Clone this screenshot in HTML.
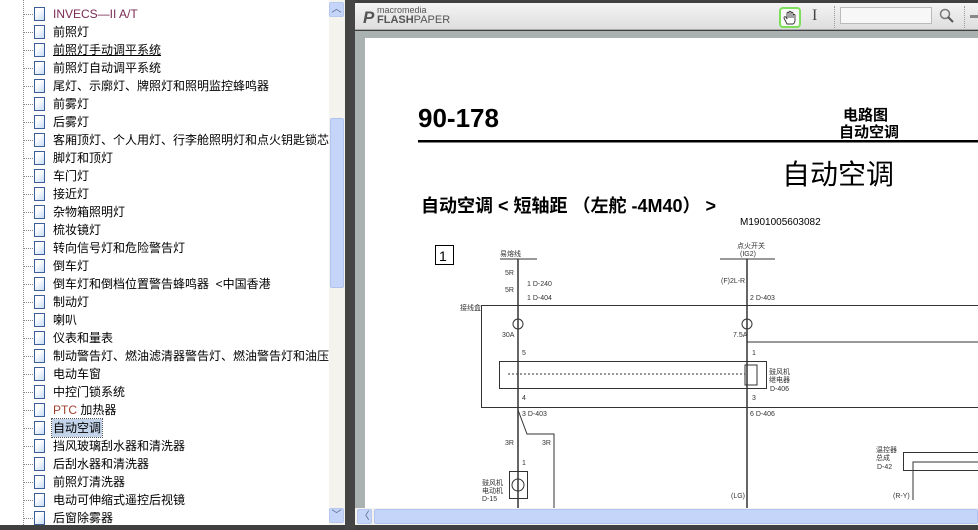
<!DOCTYPE html>
<html><head><meta charset="utf-8"><style>
*{margin:0;padding:0;box-sizing:border-box}
body{width:978px;height:530px;overflow:hidden;background:#404040;position:relative;font-family:"Liberation Sans","Noto Sans CJK SC",sans-serif}
#left{position:absolute;left:0;top:0;width:329px;height:525px;background:#fff;overflow:hidden}
.row{position:absolute;left:0;height:18px;width:329px;font-size:12px;color:#000;line-height:18px}
.row .d{position:absolute;left:24px;top:9px;width:9px;border-top:1px dotted #888}
.row .i{position:absolute;left:34px;top:2px;width:11px;height:14px;border:1px solid #3d5f99;background:linear-gradient(135deg,#fff 30%,#c8dcf7)}
.row .t{position:absolute;left:53px;top:0;white-space:nowrap}
#vline{position:absolute;left:23px;top:0;height:525px;border-left:1px dotted #888}
#lsb{position:absolute;left:329px;top:0;width:16px;height:525px;background:#f4f3ee}
.btn{position:absolute;width:15px;height:15px;border:1px solid #b6c8f0;border-radius:2px;background:#c5d5fa;color:#4d6185;font-size:10px;text-align:center;line-height:13px}
#div{position:absolute;left:345px;top:0;width:10px;height:530px;background:#454545}
#tb{position:absolute;left:355px;top:3px;width:623px;height:27px;background:linear-gradient(#f4f4f4,#dedede);border-bottom:1px solid #aaa}
#gray{position:absolute;left:355px;top:31px;width:623px;height:477px;background:#a9b1b1}
#page{position:absolute;left:365px;top:38px;width:613px;height:470px;background:#fff;overflow:hidden}
#hsb{position:absolute;left:355px;top:508px;width:623px;height:17px;background:#f4f3ee}
</style></head><body>
<div id="left">
<div id="vline"></div>
<div class="row" style="top:5px"><span class="d"></span><span class="i"></span><span class="t" style="color:#7a2a55">INVECS—II A/T</span></div>
<div class="row" style="top:23px"><span class="d"></span><span class="i"></span><span class="t">前照灯</span></div>
<div class="row" style="top:41px"><span class="d"></span><span class="i"></span><span class="t" style="text-decoration:underline">前照灯手动调平系统</span></div>
<div class="row" style="top:59px"><span class="d"></span><span class="i"></span><span class="t">前照灯自动调平系统</span></div>
<div class="row" style="top:77px"><span class="d"></span><span class="i"></span><span class="t">尾灯、示廓灯、牌照灯和照明监控蜂鸣器</span></div>
<div class="row" style="top:95px"><span class="d"></span><span class="i"></span><span class="t">前雾灯</span></div>
<div class="row" style="top:113px"><span class="d"></span><span class="i"></span><span class="t">后雾灯</span></div>
<div class="row" style="top:131px"><span class="d"></span><span class="i"></span><span class="t">客厢顶灯、个人用灯、行李舱照明灯和点火钥匙锁芯</span></div>
<div class="row" style="top:149px"><span class="d"></span><span class="i"></span><span class="t">脚灯和顶灯</span></div>
<div class="row" style="top:167px"><span class="d"></span><span class="i"></span><span class="t">车门灯</span></div>
<div class="row" style="top:185px"><span class="d"></span><span class="i"></span><span class="t">接近灯</span></div>
<div class="row" style="top:203px"><span class="d"></span><span class="i"></span><span class="t">杂物箱照明灯</span></div>
<div class="row" style="top:221px"><span class="d"></span><span class="i"></span><span class="t">梳妆镜灯</span></div>
<div class="row" style="top:239px"><span class="d"></span><span class="i"></span><span class="t">转向信号灯和危险警告灯</span></div>
<div class="row" style="top:257px"><span class="d"></span><span class="i"></span><span class="t">倒车灯</span></div>
<div class="row" style="top:275px"><span class="d"></span><span class="i"></span><span class="t">倒车灯和倒档位置警告蜂鸣器 &nbsp;&lt;中国香港</span></div>
<div class="row" style="top:293px"><span class="d"></span><span class="i"></span><span class="t">制动灯</span></div>
<div class="row" style="top:311px"><span class="d"></span><span class="i"></span><span class="t">喇叭</span></div>
<div class="row" style="top:329px"><span class="d"></span><span class="i"></span><span class="t">仪表和量表</span></div>
<div class="row" style="top:347px"><span class="d"></span><span class="i"></span><span class="t">制动警告灯、燃油滤清器警告灯、燃油警告灯和油压</span></div>
<div class="row" style="top:365px"><span class="d"></span><span class="i"></span><span class="t">电动车窗</span></div>
<div class="row" style="top:383px"><span class="d"></span><span class="i"></span><span class="t">中控门锁系统</span></div>
<div class="row" style="top:401px"><span class="d"></span><span class="i"></span><span class="t"><span style="color:#a04030">PTC</span> 加热器</span></div>
<div class="row" style="top:419px"><span class="d"></span><span class="i"></span><span class="t" style="background:#c3d3ea;outline:1px dotted #555;left:52px;padding:0 1px">自动空调</span></div>
<div class="row" style="top:437px"><span class="d"></span><span class="i"></span><span class="t">挡风玻璃刮水器和清洗器</span></div>
<div class="row" style="top:455px"><span class="d"></span><span class="i"></span><span class="t">后刮水器和清洗器</span></div>
<div class="row" style="top:473px"><span class="d"></span><span class="i"></span><span class="t">前照灯清洗器</span></div>
<div class="row" style="top:491px"><span class="d"></span><span class="i"></span><span class="t">电动可伸缩式遥控后视镜</span></div>
<div class="row" style="top:509px"><span class="d"></span><span class="i"></span><span class="t">后窗除雾器</span></div>
</div>
<div id="lsb">
<div class="btn" style="left:0;top:2px">︿</div>
<div style="position:absolute;left:1px;top:118px;width:14px;height:170px;background:#c5d5fa;border:1px solid #b0c4f0;border-radius:2px"></div>
<div class="btn" style="left:0;top:508px">﹀</div>
</div>
<div id="div"></div>
<div id="tb">
<div style="position:absolute;left:8px;top:5px;font-size:17px;font-weight:bold;color:#555;font-style:italic">P</div>
<div style="position:absolute;left:22px;top:3px;font-size:9px;color:#555;line-height:9px">macromedia</div>
<div style="position:absolute;left:22px;top:11px;font-size:11px;color:#555;line-height:12px"><b>FLASH</b>PAPER</div>
<div style="position:absolute;left:424px;top:4px;width:22px;height:21px;border:2px solid #7ddf5a;border-radius:4px;background:#f8f8f8"></div>
<svg style="position:absolute;left:428px;top:7px" width="15" height="16"><path d="M4 14 L1 8 Q1 6 3 7 L4 9 L4 3 Q5 1.5 6 3 L6 8 L6 2 Q7 0.5 8 2 L8 8 L8 3 Q9 1.5 10 3 L10 8 L10 5 Q11 4 12 5 L12 10 Q12 13 10 14 Z" fill="#fff" stroke="#333" stroke-width="0.9"/></svg>
<div style="position:absolute;left:457px;top:4px;font-size:16px;color:#444;font-family:'Liberation Serif',serif">I</div>
<div style="position:absolute;left:479px;top:3px;height:22px;border-left:1px dotted #999"></div>
<div style="position:absolute;left:485px;top:4px;width:92px;height:17px;border:1px solid #bbb;background:#f7f7f7"></div>
<svg style="position:absolute;left:584px;top:5px" width="16" height="16"><circle cx="6" cy="6" r="4.5" fill="none" stroke="#777" stroke-width="1.5"/><line x1="9" y1="9" x2="14" y2="14" stroke="#555" stroke-width="2"/></svg>
<div style="position:absolute;left:609px;top:3px;height:22px;border-left:1px dotted #999"></div>
<div style="position:absolute;left:615px;top:12px;width:8px;height:3px;background:#888"></div>
</div>
<div id="gray"></div>
<div id="page">
<svg width="613" height="470" style="position:absolute;left:0;top:0" font-family="Liberation Sans,Noto Sans CJK SC,sans-serif">
<g transform="translate(-365,-38)">
<text x="418" y="127" font-size="26" font-weight="bold">90-178</text>
<text x="843" y="120" font-size="15" font-weight="bold">电路图</text>
<text x="839" y="137" font-size="15" font-weight="bold">自动空调</text>
<rect x="418" y="140" width="560" height="2.5" fill="#000"/>
<text x="782" y="184" font-size="28">自动空调</text>
<text x="421" y="212" font-size="18" font-weight="bold">自动空调 &lt; 短轴距 （左舵 -4M40） &gt;</text>
<text x="740" y="225" font-size="10">M1901005603082</text>
<rect x="435.5" y="245.5" width="18" height="19" fill="none" stroke="#000"/>
<text x="439" y="261" font-size="14">1</text>
<g stroke="#333" fill="none" stroke-width="1">
<line x1="500" y1="259" x2="537" y2="259"/>
<line x1="720" y1="259" x2="775" y2="259"/>
<line x1="518" y1="259" x2="518" y2="525" stroke-width="1.5"/>
<line x1="747" y1="259" x2="747" y2="525" stroke-width="1.5"/>
<rect x="481.5" y="305.5" width="520" height="102"/>
<rect x="499.5" y="361.5" width="267" height="27"/>
<line x1="747" y1="342" x2="978" y2="342"/>
<line x1="508" y1="374" x2="745" y2="374" stroke-dasharray="2,2"/>
<polyline points="518,410 527,434 554,434 554,525"/>
<rect x="509.5" y="471.5" width="18" height="27"/>
<circle cx="518" cy="485" r="6"/>
<circle cx="518" cy="324" r="5"/><circle cx="747" cy="324" r="5"/>
<rect x="903.5" y="452.5" width="80" height="18"/>
<polyline points="913,500 913,462 980,462"/>
<rect x="745" y="365" width="12" height="20"/>
</g>
<g font-size="7" fill="#333">
<text x="500" y="256">易熔线</text><text x="737" y="248">点火开关</text><text x="740" y="256">(IG2)</text>
<text x="505" y="275">5R</text><text x="505" y="292">5R</text><text x="721" y="283">(F)2L-R</text>
<text x="527" y="286">1 D-240</text><text x="527" y="300">1 D-404</text><text x="750" y="300">2 D-403</text>
<text x="460" y="310">接线盒</text><text x="502" y="337">30A</text><text x="733" y="337">7.5A</text>
<text x="522" y="355">5</text><text x="752" y="355">1</text><text x="769" y="374">鼓风机</text><text x="769" y="382">继电器</text><text x="770" y="391">D-406</text>
<text x="522" y="400">4</text><text x="752" y="400">3</text><text x="522" y="416">3 D-403</text><text x="750" y="416">6 D-406</text>
<text x="505" y="445">3R</text><text x="542" y="445">3R</text><text x="522" y="465">1</text>
<text x="482" y="485">鼓风机</text><text x="482" y="493">电动机</text><text x="482" y="501">D-15</text>
<text x="731" y="498">(LG)</text><text x="876" y="452">温控器</text><text x="876" y="460">总成</text><text x="877" y="469">D-42</text>
<text x="893" y="498">(R-Y)</text>
</g>
</g>
</svg>
</div>
<div id="hsb">
<div class="btn" style="left:2px;top:1px">〈</div>
<div style="position:absolute;left:19px;top:1px;width:604px;height:15px;background:#c5d5fa;border:1px solid #b0c4f0;border-radius:2px"></div>
</div>
</body></html>
